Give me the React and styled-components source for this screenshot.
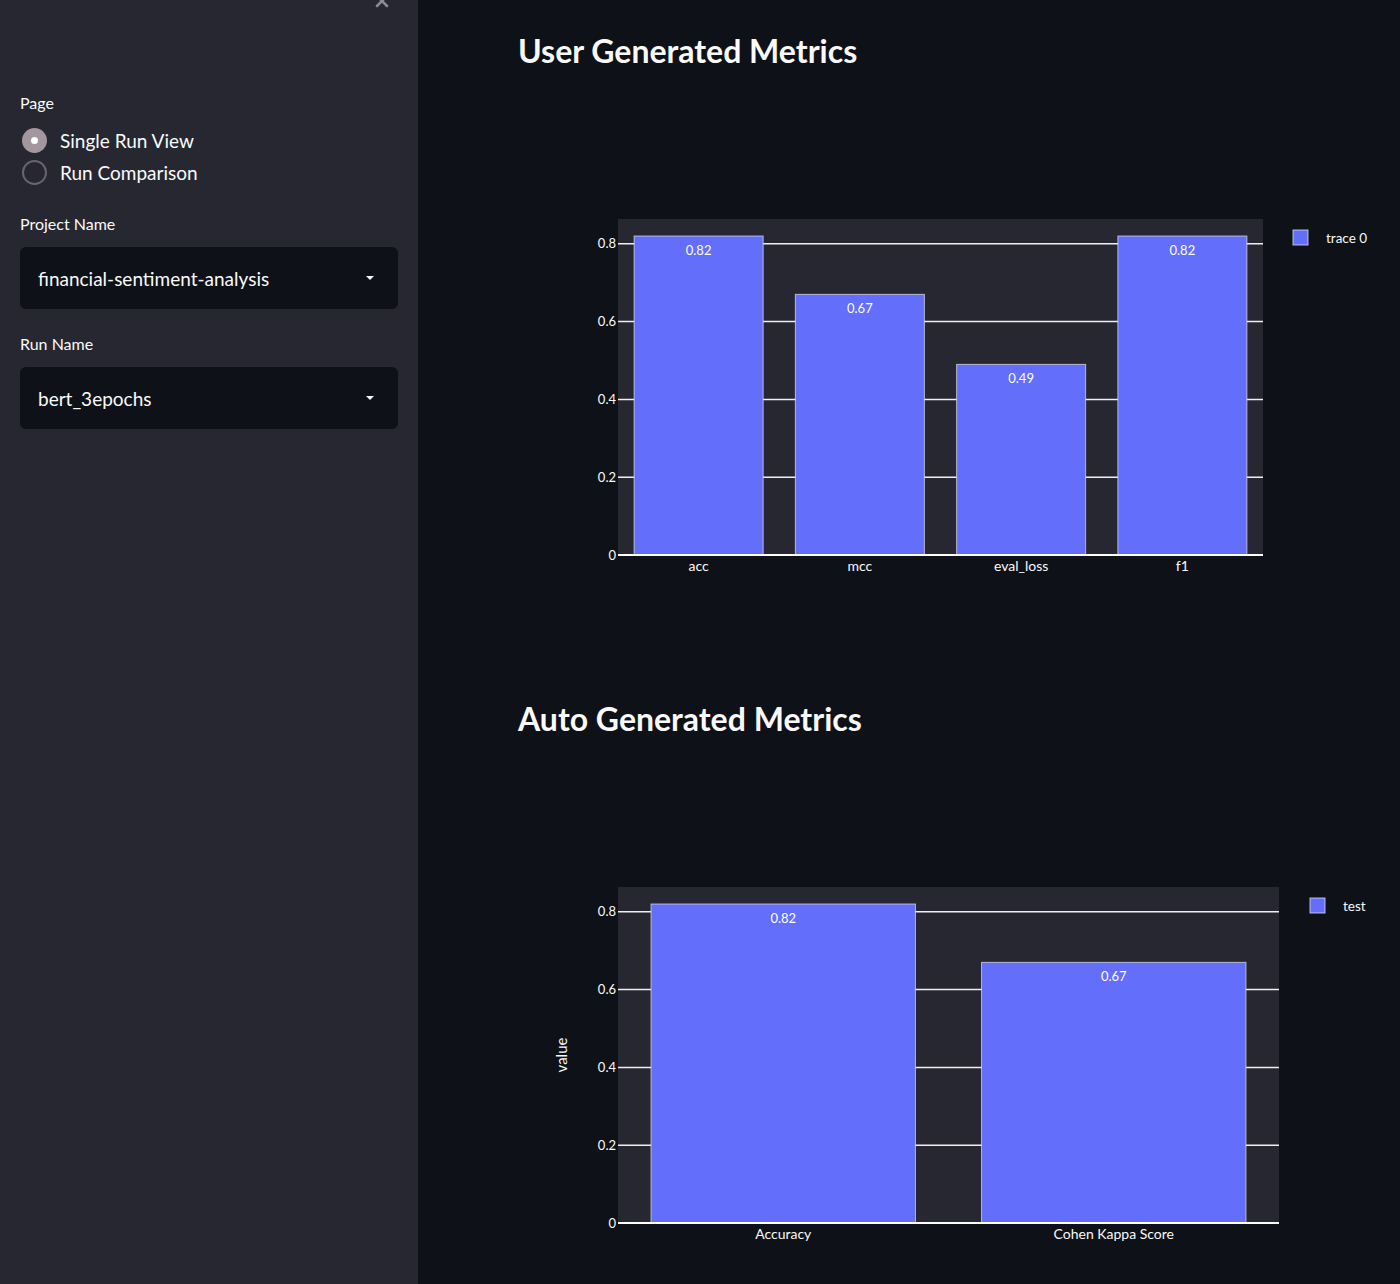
import React from "react";
import styled, { createGlobalStyle } from "styled-components";
import { X } from "lucide-react";

const GlobalStyle = createGlobalStyle`
  html, body {
    margin: 0;
    padding: 0;
    background: #0e1117;
    font-family: Lato, "Noto Sans", sans-serif;
    color: #fafafa;
  }
`;

const PLOT_TOP = 147;
const PLOT_BOTTOM = 483;
const PLOT_LEFT = 100;
const UNIT = 389;
const TICKS = [0, 0.2, 0.4, 0.6, 0.8];

function yOf(v) {
  return PLOT_BOTTOM - v * UNIT;
}

function BarChart({ plotWidth, data, legend, legendX, yTitle, height }) {
  const right = PLOT_LEFT + plotWidth;
  const step = plotWidth / data.length;
  const barW = step * 0.8;

  return (
    <ChartSvg width="882" height={height} viewBox={`0 0 882 ${height}`}>
      <rect
        x={PLOT_LEFT}
        y={PLOT_TOP}
        width={plotWidth}
        height={PLOT_BOTTOM - PLOT_TOP}
        fill="#262730"
      />
      {TICKS.map((t) => (
        <g key={t}>
          {t > 0 && (
            <line
              x1={PLOT_LEFT}
              x2={right}
              y1={yOf(t)}
              y2={yOf(t)}
              stroke="#f0f0f0"
              strokeWidth="1.5"
            />
          )}
          <text
            x={PLOT_LEFT - 2}
            y={yOf(t) + 4.5}
            textAnchor="end"
            fontSize="13"
            fill="#fafafa"
          >
            {t === 0 ? "0" : t.toFixed(1)}
          </text>
        </g>
      ))}
      {data.map((d, i) => {
        const cx = PLOT_LEFT + step * i + step / 2;
        const top = yOf(d.value);
        return (
          <g key={d.label}>
            <rect
              x={cx - barW / 2}
              y={top}
              width={barW}
              height={PLOT_BOTTOM - top}
              fill="#636efa"
              stroke="rgba(220,220,230,0.75)"
              strokeWidth="1"
            />
            <text
              x={cx}
              y={top + 19}
              textAnchor="middle"
              fontSize="13"
              fill="#ffffff"
            >
              {d.value.toFixed(2)}
            </text>
            <text
              x={cx}
              y={PLOT_BOTTOM + 16}
              textAnchor="middle"
              fontSize="14"
              fill="#fafafa"
            >
              {d.label}
            </text>
          </g>
        );
      })}
      <line
        x1={PLOT_LEFT}
        x2={right}
        y1={PLOT_BOTTOM}
        y2={PLOT_BOTTOM}
        stroke="#ffffff"
        strokeWidth="2"
      />
      {yTitle && (
        <text
          x="0"
          y="0"
          transform={`translate(49 ${315}) rotate(-90)`}
          textAnchor="middle"
          fontSize="15"
          fill="#fafafa"
        >
          {yTitle}
        </text>
      )}
      <rect
        x={legendX}
        y="158"
        width="15"
        height="15"
        fill="#636efa"
        stroke="rgba(220,220,230,0.8)"
        strokeWidth="1"
      />
      <text x={legendX + 33} y="171" fontSize="13.5" fill="#fafafa">
        {legend}
      </text>
    </ChartSvg>
  );
}

function Radio({ checked, children }) {
  return (
    <RadioRow>
      <RadioDot checked={checked} />
      <RadioText>{children}</RadioText>
    </RadioRow>
  );
}

function Select({ value }) {
  return (
    <SelectBox>
      <span>{value}</span>
      <Caret />
    </SelectBox>
  );
}

export default function App() {
  return (
    <>
      <GlobalStyle />
      <Layout>
        <Sidebar>
          <SidebarHeader>
            <CloseButton>
              <X size={20} strokeWidth={3} />
            </CloseButton>
          </SidebarHeader>
          <Label>Page</Label>
          <RadioGroup>
            <Radio checked>Single Run View</Radio>
            <Radio>Run Comparison</Radio>
          </RadioGroup>
          <Label>Project Name</Label>
          <Select value="financial-sentiment-analysis" />
          <Label>Run Name</Label>
          <Select value="bert_3epochs" />
        </Sidebar>
        <Main>
          <Title>User Generated Metrics</Title>
          <BarChart
            height={626}
            plotWidth={645}
            legend="trace 0"
            legendX={775}
            data={[
              { label: "acc", value: 0.82 },
              { label: "mcc", value: 0.67 },
              { label: "eval_loss", value: 0.49 },
              { label: "f1", value: 0.82 },
            ]}
          />
          <Title>Auto Generated Metrics</Title>
          <BarChart
            height={544}
            plotWidth={661}
            legend="test"
            legendX={792}
            yTitle="value"
            data={[
              { label: "Accuracy", value: 0.82 },
              { label: "Cohen Kappa Score", value: 0.67 },
            ]}
          />
        </Main>
      </Layout>
    </>
  );
}

const Layout = styled.div`
  display: flex;
  min-height: 100vh;
  overflow: hidden;
`;

const Sidebar = styled.aside`
  width: 418px;
  flex-shrink: 0;
  background: #262730;
  padding: 0 20px;
  box-sizing: border-box;
  display: flex;
  flex-direction: column;
`;

const SidebarHeader = styled.div`
  height: 92px;
  display: flex;
  justify-content: flex-end;
  align-items: flex-start;
`;

const CloseButton = styled.div`
  color: #8d8a98;
  margin-top: -9px;
  margin-right: 6px;
`;

const Label = styled.div`
  font-size: 16px;
  line-height: 22px;
  color: #fafafa;
  margin-bottom: 12px;
`;

const RadioGroup = styled.div`
  display: flex;
  flex-direction: column;
  gap: 7px;
  margin-top: 2px;
  margin-bottom: 28px;
`;

const RadioRow = styled.div`
  display: flex;
  align-items: center;
  gap: 13px;
  height: 25px;
  padding-left: 2px;
`;

const RadioDot = styled.span`
  width: 25px;
  height: 25px;
  border-radius: 50%;
  box-sizing: border-box;
  position: relative;
  background: ${(p) => (p.checked ? "#a3969f" : "#262730")};
  border: ${(p) => (p.checked ? "none" : "2px solid #6b6470")};

  &::after {
    content: "";
    display: ${(p) => (p.checked ? "block" : "none")};
    position: absolute;
    left: 50%;
    top: 50%;
    width: 7px;
    height: 7px;
    margin: -3.5px 0 0 -3.5px;
    border-radius: 50%;
    background: #ffffff;
  }
`;

const RadioText = styled.span`
  font-size: 19px;
  color: #fafafa;
`;

const SelectBox = styled.div`
  height: 62px;
  background: #0e1117;
  border-radius: 6px;
  display: flex;
  align-items: center;
  justify-content: space-between;
  padding: 0 24px 0 18px;
  font-size: 19px;
  color: #fafafa;
  margin-bottom: 24px;
`;

const Caret = styled.span`
  width: 0;
  height: 0;
  border-left: 4.5px solid transparent;
  border-right: 4.5px solid transparent;
  border-top: 4.5px solid #fafafa;
`;

const Main = styled.main`
  flex: 1;
  padding: 30px 0 0 100px;
  display: flex;
  flex-direction: column;
`;

const Title = styled.h1`
  margin: 0;
  font-size: 32px;
  line-height: 42px;
  font-weight: 700;
  color: #fafafa;
`;

const ChartSvg = styled.svg`
  display: block;
  font-family: Lato, "Noto Sans", sans-serif;
`;
